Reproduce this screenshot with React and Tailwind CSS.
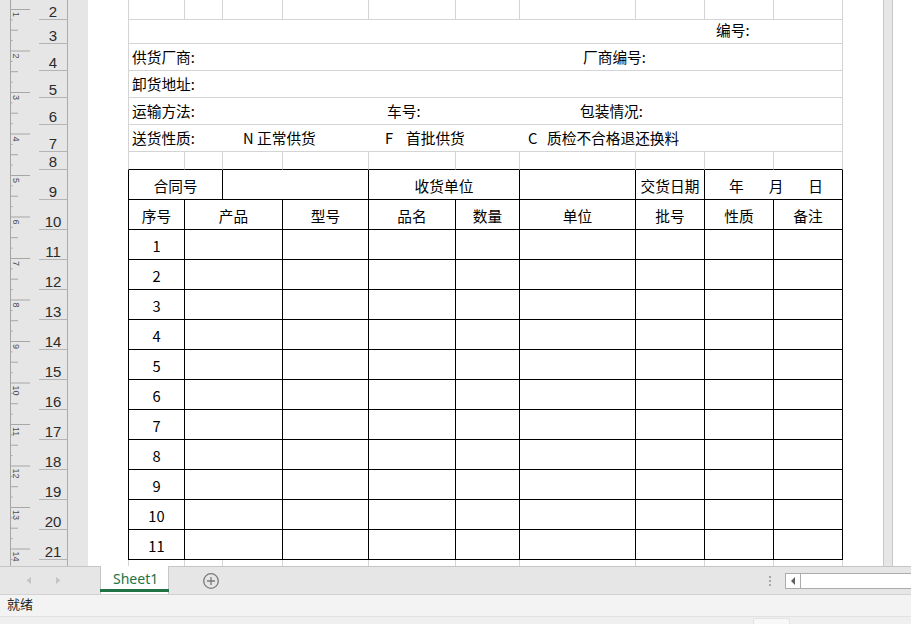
import clsx from 'clsx'

const ROW_HEIGHTS = [20, 24, 27, 27, 27, 27, 18, 30, 30, 30, 30, 30, 30, 30, 30, 30, 30, 30, 30, 30]
const ROW_NUMBERS = [2, 3, 4, 5, 6, 7, 8, 9, 10, 11, 12, 13, 14, 15, 16, 17, 18, 19, 20, 21]

const LIGHT = 'border-[#d4d4d4]'
const TEXT = 'flex items-end pb-[3px] leading-[20px]'

function Ruler() {
  const ticks = []
  for (let k = -1; k <= 13; k++) {
    const y = 9 + 41.5 * k
    ticks.push(<line key={`l${k}`} x1="10" x2="30" y1={y + 0.5} y2={y + 0.5} />)
    ticks.push(<line key={`a${k}`} x1="10" x2="12.5" y1={y + 10.9} y2={y + 10.9} />)
    ticks.push(<line key={`b${k}`} x1="10" x2="18" y1={y + 21.2} y2={y + 21.2} />)
    ticks.push(<line key={`c${k}`} x1="10" x2="12.5" y1={y + 31.6} y2={y + 31.6} />)
  }
  const labels = []
  for (let k = 0; k <= 13; k++) {
    const y = 9 + 41.5 * k
    labels.push(
      <text key={k} transform={`translate(12.5, ${y + 3}) rotate(90)`} fontSize="9" fill="#4b4b5a" fontFamily="Liberation Sans, sans-serif">
        {k + 1}
      </text>
    )
  }
  return (
    <svg width="39" height="566" className="shrink-0">
      <g stroke="#a6a6a6" strokeWidth="1">
        <line x1="10.5" x2="10.5" y1="0" y2="566" />
        {ticks}
      </g>
      {labels}
    </svg>
  )
}

function RowHeaders() {
  return (
    <div className="w-[29px] shrink-0 border-r border-[#ababab] flex flex-col">
      {ROW_HEIGHTS.map((h, i) => (
        <div
          key={i}
          className="border-b border-[#b4b4b4] flex items-end justify-center text-[15px] leading-[15px] text-[#2b2b2b] font-['Liberation_Sans',sans-serif]"
          style={{ height: h }}
        >
          {ROW_NUMBERS[i]}
        </div>
      ))}
    </div>
  )
}

function GridRowLight({ last }) {
  return Array.from({ length: 10 }, (_, i) => (
    <div key={i} className={clsx('border-r', !last && 'border-b', i === 0 && 'border-l', LIGHT)} />
  ))
}

function Sheet() {
  const dark = 'border-r border-b border-black'
  return (
    <div className="grid grid-cols-[57px_38px_60px_86px_87px_64px_116px_69px_69px_69px] grid-rows-[20px_24px_27px_27px_27px_27px_18px_repeat(13,30px)_6px] text-[14.7px] text-black font-['Noto_Sans_CJK_SC',sans-serif]">
      {/* row 2 */}
      <GridRowLight />

      {/* row 3 */}
      <div className={clsx('col-span-10 border-l border-r border-b pl-[587px]', LIGHT, TEXT)}>编号:</div>

      {/* row 4 */}
      <div className={clsx('col-span-10 border-l border-r border-b pl-[3px]', LIGHT, TEXT)}>
        <span className="w-[451px]">供货厂商:</span>
        <span>厂商编号:</span>
      </div>

      {/* row 5 */}
      <div className={clsx('col-span-10 border-l border-r border-b pl-[3px]', LIGHT, TEXT)}>卸货地址:</div>

      {/* row 6 */}
      <div className={clsx('col-span-10 border-l border-r border-b pl-[3px]', LIGHT, TEXT)}>
        <span className="w-[255px]">运输方法:</span>
        <span className="w-[193px]">车号:</span>
        <span>包装情况:</span>
      </div>

      {/* row 7 */}
      <div className={clsx('col-span-10 border-l border-r border-b pl-[3px]', LIGHT, TEXT)}>
        <span className="w-[111px]">送货性质:</span>
        <span className="w-[14px]">N</span>
        <span className="w-[128px]">正常供货</span>
        <span className="w-[21px]">F</span>
        <span className="w-[122px]">首批供货</span>
        <span className="w-[19px]">C</span>
        <span>质检不合格退还换料</span>
      </div>

      {/* row 8 */}
      {Array.from({ length: 10 }, (_, i) => (
        <div key={i} className={clsx('border-r border-b border-r-[#d4d4d4] border-b-black', i === 0 && 'border-l border-l-[#d4d4d4]')} />
      ))}

      {/* row 9 */}
      <div className={clsx('col-span-2 border-l justify-center', dark, TEXT)}>合同号</div>
      <div className={clsx('col-span-2', dark)} />
      <div className={clsx('col-span-2 justify-center', dark, TEXT)}>收货单位</div>
      <div className={dark} />
      <div className={clsx('justify-center', dark, TEXT)}>交货日期</div>
      <div className={clsx('col-span-2 justify-center gap-[25px] pl-[5px]', dark, TEXT)}>
        <span>年</span>
        <span>月</span>
        <span>日</span>
      </div>

      {/* row 10 */}
      <div className={clsx('border-l justify-center', dark, TEXT)}>序号</div>
      <div className={clsx('col-span-2 justify-center', dark, TEXT)}>产品</div>
      {['型号', '品名', '数量', '单位', '批号', '性质', '备注'].map(t => (
        <div key={t} className={clsx('justify-center', dark, TEXT)}>{t}</div>
      ))}

      {/* rows 11-21 */}
      {Array.from({ length: 11 }, (_, r) => [
        <div key={`n${r}`} className={clsx('border-l justify-center', dark, TEXT)}>{r + 1}</div>,
        <div key={`p${r}`} className={clsx('col-span-2', dark)} />,
        ...Array.from({ length: 7 }, (_, c) => <div key={`c${r}-${c}`} className={dark} />),
      ])}

      {/* row 22, cut off */}
      <GridRowLight last />
    </div>
  )
}

function TabBar() {
  return (
    <div className="h-[29px] shrink-0 bg-[#e6e6e6] border-t border-b border-t-[#c6c6c6] border-b-[#d2d2d2] flex items-stretch relative">
      <div className="w-[100px] flex items-center">
        <svg width="100" height="27">
          <polygon points="31,10 31,17 26.5,13.5" fill="#c4c4c4" />
          <polygon points="56,10 56,17 60.5,13.5" fill="#c4c4c4" />
        </svg>
      </div>
      <div className="w-[69px] -mt-px bg-white border-l border-r border-[#c6c6c6] flex flex-col">
        <div className="flex-1 flex items-center pl-[12px] text-[14px] text-[#217346] font-['Noto_Sans',sans-serif] pt-[1px]">
          Sheet1
        </div>
        <div className="h-[3px] bg-[#217346] -mx-px mb-[2px]" />
      </div>
      <div className="w-[33px]" />
      <div className="flex items-center">
        <svg width="18" height="18" viewBox="0 0 18 18">
          <circle cx="9" cy="9" r="7.3" fill="none" stroke="#7a7a7a" strokeWidth="1.3" />
          <path d="M9 5v8M5 9h8" stroke="#7a7a7a" strokeWidth="1.3" />
        </svg>
      </div>
      <div className="flex-1" />
      <div className="flex flex-col items-center justify-center gap-[2px] mr-[14px]">
        <div className="w-[2px] h-[2px] bg-[#a6a6a6]" />
        <div className="w-[2px] h-[2px] bg-[#a6a6a6]" />
        <div className="w-[2px] h-[2px] bg-[#a6a6a6]" />
      </div>
      <div className="w-[126px] mt-[6px] mb-[5px] border border-r-0 border-[#ababab] bg-white flex">
        <div className="w-[15px] border-r border-[#ababab] flex items-center justify-center">
          <svg width="6" height="8">
            <polygon points="5,0 5,8 1,4" fill="#606060" />
          </svg>
        </div>
      </div>
    </div>
  )
}

export default function App() {
  return (
    <div className="w-[911px] h-[624px] overflow-hidden flex flex-col bg-white">
      <div className="h-[566px] shrink-0 flex overflow-hidden">
        <div className="w-[88px] shrink-0 bg-[#e6e6e6] flex">
          <Ruler />
          <RowHeaders />
        </div>
        <div className="w-[795px] shrink-0 bg-white pl-[40px]">
          <Sheet />
        </div>
        <div className="w-[10px] shrink-0 bg-[#e6e6e6] border-l border-r border-[#c8c8c8]" />
        <div className="flex-1 bg-white" />
      </div>
      <TabBar />
      <div className="h-[21px] shrink-0 bg-[#f3f3f3] flex items-center pl-[7px] pb-[3px] text-[13px] text-[#262626] font-['Noto_Sans_CJK_SC',sans-serif]">
        就绪
      </div>
      <div className="h-[8px] shrink-0 bg-[#efefef] border-t border-[#e2e2e2] relative">
        <div className="absolute left-[753px] top-[1px] w-[37px] h-[8px] bg-[#f8f8f8] rounded-t-[3px] border border-b-0 border-[#e2e2e2]" />
      </div>
    </div>
  )
}
